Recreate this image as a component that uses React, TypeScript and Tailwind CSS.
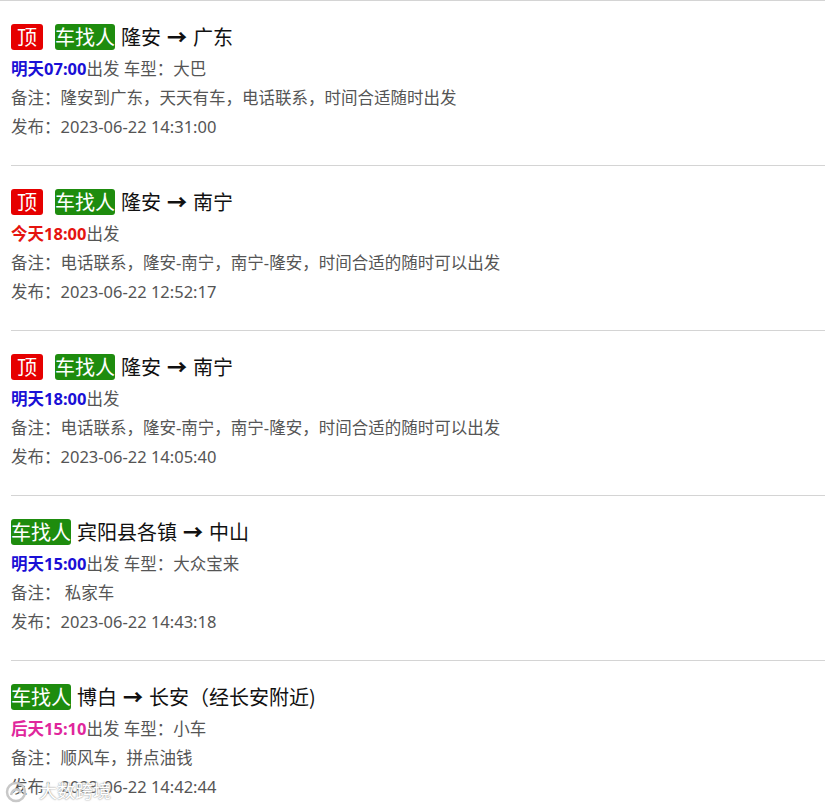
import React from "react";

type Trip = {
  top?: boolean;
  from: string;
  to: string;
  when: string;
  whenColor: string;
  car?: string;
  note: string;
  time: string;
};

const trips: Trip[] = [
  {
    top: true,
    from: "隆安",
    to: "广东",
    when: "明天07:00",
    whenColor: "text-[#1a0fd6]",
    car: "大巴",
    note: "隆安到广东，天天有车，电话联系，时间合适随时出发",
    time: "2023-06-22 14:31:00",
  },
  {
    top: true,
    from: "隆安",
    to: "南宁",
    when: "今天18:00",
    whenColor: "text-[#e5140f]",
    note: "电话联系，隆安-南宁，南宁-隆安，时间合适的随时可以出发",
    time: "2023-06-22 12:52:17",
  },
  {
    top: true,
    from: "隆安",
    to: "南宁",
    when: "明天18:00",
    whenColor: "text-[#1a0fd6]",
    note: "电话联系，隆安-南宁，南宁-隆安，时间合适的随时可以出发",
    time: "2023-06-22 14:05:40",
  },
  {
    from: "宾阳县各镇",
    to: "中山",
    when: "明天15:00",
    whenColor: "text-[#1a0fd6]",
    car: "大众宝来",
    note: " 私家车",
    time: "2023-06-22 14:43:18",
  },
  {
    from: "博白",
    to: "长安（经长安附近)",
    when: "后天15:10",
    whenColor: "text-[#e0269c]",
    car: "小车",
    note: "顺风车，拼点油钱",
    time: "2023-06-22 14:42:44",
  },
];

function TripItem({ trip }: { trip: Trip }) {
  return (
    <li className="ml-[11px] border-b border-[#d4d4d4] pt-[19px] pb-[24px]">
      <div className="flex h-[34px] items-center text-[20px] text-[#111] [font-family:'Noto_Sans_CJK_SC',sans-serif]">
        {trip.top && (
          <span className="mr-[12px] flex h-[26px] items-center rounded-[3px] bg-[#e60000] px-[6px] text-white">
            顶
          </span>
        )}
        <span className="mr-[6px] flex h-[26px] items-center rounded-[3px] bg-[#1e8c0e] text-white">
          车找人
        </span>
        <span>{trip.from}</span>
        <span className="mx-[6px] font-black">→</span>
        <span>{trip.to}</span>
      </div>
      <div className="text-[16.5px] leading-[29px] text-[#555]">
        <div>
          <b className={`font-bold ${trip.whenColor}`}>{trip.when}</b>
          出发{trip.car && <> 车型：{trip.car}</>}
        </div>
        <div className="whitespace-pre">备注：{trip.note}</div>
        <div>发布：{trip.time}</div>
      </div>
    </li>
  );
}

export default function App() {
  return (
    <div
      className="relative h-[809px] w-[825px] overflow-hidden border-t border-[#d4d4d4] bg-white"
      style={{ fontFamily: '"Noto Sans", "Noto Sans CJK SC", sans-serif' }}
    >
      <ul>
        {trips.map((t, i) => (
          <TripItem key={i} trip={t} />
        ))}
      </ul>

      {/* watermark */}
      <div className="absolute bottom-[4px] left-[5px] flex items-center gap-[10px]">
        <svg width="24" height="22" viewBox="0 0 24 22">
          <circle cx="11" cy="11" r="9" fill="none" stroke="#c8c8c8" strokeWidth="2.5" />
          <path d="M6 14 C8 7, 14 7, 16 12" fill="none" stroke="#c8c8c8" strokeWidth="2.5" />
        </svg>
        <span className="text-[18px] text-white [text-shadow:0_0_1px_#999,0_0_2px_#aaa]">
          大数跨境
        </span>
      </div>
    </div>
  );
}
